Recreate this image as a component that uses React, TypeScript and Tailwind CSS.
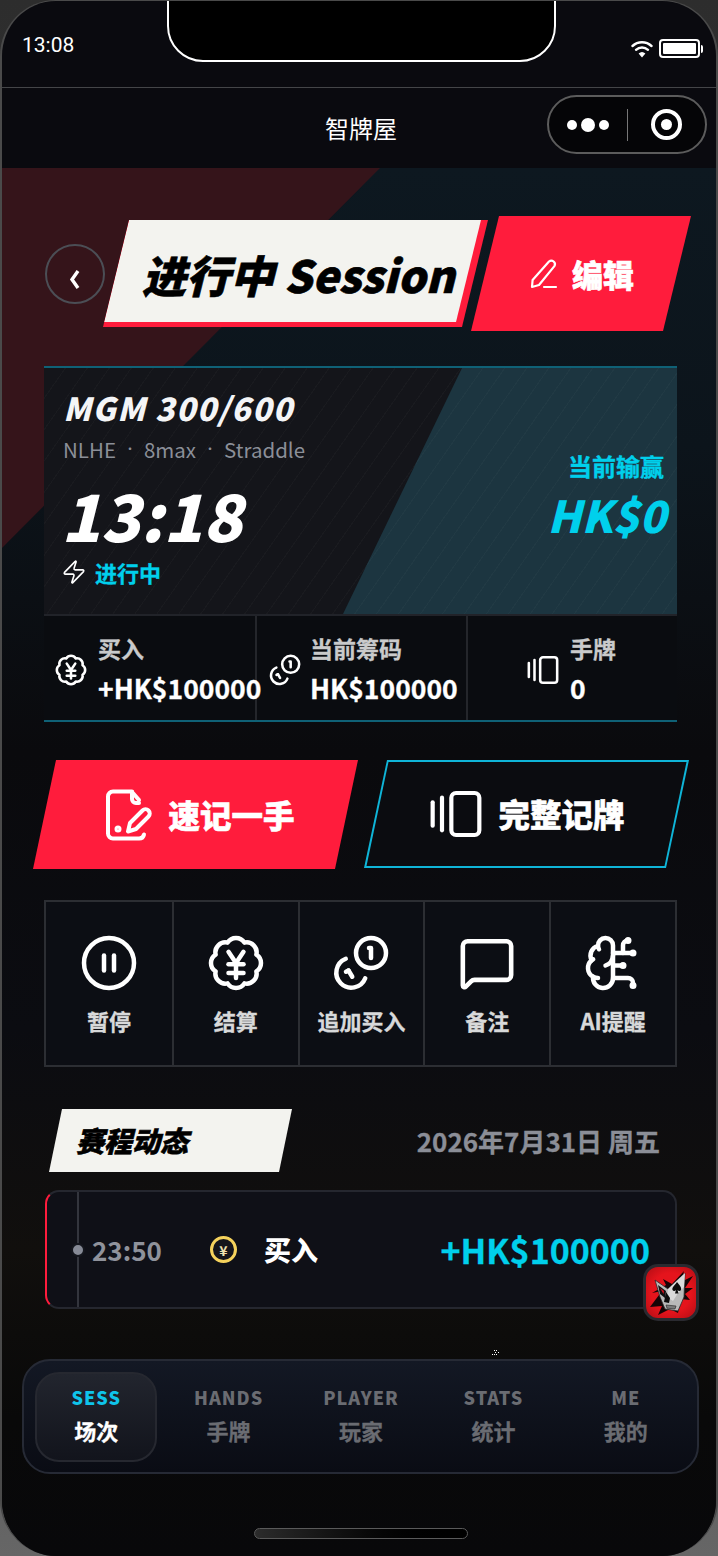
import {
  BrainCircuit,
  CirclePause,
  GalleryHorizontalEnd,
  MessageSquare,
  Zap,
} from "lucide-react";

const cjk = "font-['Noto_Sans_CJK_SC',sans-serif]";
const heavy = "font-black [-webkit-text-stroke:0.6px_currentColor]";
const thick = "font-bold [-webkit-text-stroke:0.3px_currentColor]";

function YenBadge({ size, strokeWidth = 2 }: { size: number; strokeWidth?: number }) {
  return (
    <svg width={size} height={size} viewBox="0 0 24 24" fill="none" stroke="currentColor" strokeWidth={strokeWidth} strokeLinecap="round" strokeLinejoin="round">
      <path d="M3.85 8.62a4 4 0 0 1 4.78-4.77 4 4 0 0 1 6.74 0 4 4 0 0 1 4.78 4.78 4 4 0 0 1 0 6.74 4 4 0 0 1-4.77 4.78 4 4 0 0 1-6.75 0 4 4 0 0 1-4.78-4.77 4 4 0 0 1 0-6.76Z" />
      <path d="m9 7.5 3 4.5 3-4.5" />
      <path d="M9 12.5h6" />
      <path d="M9 16h6" />
      <path d="M12 12v6" />
    </svg>
  );
}

function CoinsIcon({ size, strokeWidth = 2 }: { size: number; strokeWidth?: number }) {
  return (
    <svg width={size} height={size} viewBox="0 0 24 24" fill="none" stroke="currentColor" strokeWidth={strokeWidth} strokeLinecap="round" strokeLinejoin="round">
      <circle cx="16" cy="8" r="6" />
      <path d="M15.2 6H16v4" />
      <path d="M13.7 18.1A6 6 0 1 1 5.9 10.3" />
      <path d="m7 15 1.5 2.5" />
      <path d="m6 15.5 1-.5" />
    </svg>
  );
}

function QuickNoteIcon() {
  return (
    <svg width="48" height="52" viewBox="0 0 48 52" fill="none" stroke="currentColor" strokeWidth="4" strokeLinecap="round" strokeLinejoin="round">
      <path d="M27 2.5H8a5 5 0 0 0-5 5v37a5 5 0 0 0 5 5h26a5 5 0 0 0 5-4" />
      <path d="M27 3v7a4 4 0 0 0 4 4h3" />
      <path d="M27 3l7 8" />
      <circle cx="13" cy="40" r="1.5" />
      <path d="M37.5 21.5a4.2 4.2 0 0 1 6 6L31 40l-8 2.5 2-8.5z" />
    </svg>
  );
}

function PenIcon() {
  return (
    <svg width="30" height="32" viewBox="0 0 30 32" fill="none" stroke="currentColor" strokeWidth="2.2" strokeLinecap="round" strokeLinejoin="round">
      <path d="M20 3.5a3.6 3.6 0 0 1 5.4 4.6L10 27l-7 2 .6-7z" />
      <path d="M15 29h12" />
    </svg>
  );
}

function JokerIcon() {
  return (
    <svg width="50" height="51" viewBox="0 0 50 51">
      <path d="M4 40 16 24 6 26l14-8-3-6 9 5 12-13-3 11 12-6-8 12 8 0-8 6 5 6-9-1-3 14-8-4-12 6 4-9z" fill="#160406" />
      <path d="M9 13l13 9L39 6l-1 24-6 14-13-2-5-12z" fill="#b9b9b9" stroke="#2b2b2b" strokeWidth="0.8" />
      <path d="M22 22 39 6l-1 14-6 6-5 8-6-4z" fill="#dadada" />
      <path d="M31 15c2 3 5 5 4 8-1 1.600-2.500 1-3.500 0l1 3.500h-3.500l1-3.500c-1 1-2.500 1.500-3.500 0-1-3 3-5 4.500-8z" fill="#0c0c0c" />
      <path d="M12 18l8 6-1 7-5-4z" fill="#101010" />
      <path d="M14 21l4 3-.5 3z" fill="#d3121f" />
      <path d="M20 25l4 6-1 5-5-1z" fill="#0c0c0c" />
      <path d="M20 38l10 1-1 3-8-.8z" fill="#7a7a7a" stroke="#222" strokeWidth="0.6" />
    </svg>
  );
}

const stats = [
  { label: "买入", value: "+HK$100000", wrap: "pl-[10px] gap-[10px]", icon: <YenBadge size={34} strokeWidth={1.8} /> },
  { label: "当前筹码", value: "HK$100000", wrap: "pl-[11px] gap-[8px]", icon: <CoinsIcon size={34} strokeWidth={1.8} /> },
  { label: "手牌", value: "0", wrap: "pl-[58px] gap-[10px]", icon: <GalleryHorizontalEnd size={34} strokeWidth={1.8} /> },
];

const actions = [
  { label: "暂停", icon: <CirclePause size={60} strokeWidth={1.8} /> },
  { label: "结算", icon: <YenBadge size={60} strokeWidth={1.8} /> },
  { label: "追加买入", icon: <CoinsIcon size={60} strokeWidth={1.8} /> },
  { label: "备注", icon: <MessageSquare size={58} strokeWidth={1.9} /> },
  { label: "AI提醒", icon: <BrainCircuit size={60} strokeWidth={1.8} /> },
];

const tabs = [
  { en: "SESS", zh: "场次", active: true },
  { en: "HANDS", zh: "手牌" },
  { en: "PLAYER", zh: "玩家" },
  { en: "STATS", zh: "统计" },
  { en: "ME", zh: "我的" },
];

export default function App() {
  return (
    <div className={`relative h-[1556px] w-[718px] overflow-hidden bg-gradient-to-b from-[#2d2d2d] via-[#3a3a3a] to-[#666666] ${cjk}`}>
      <div className="relative flex h-full flex-col overflow-hidden rounded-[56px] border-l-2 border-r-2 border-t border-[#4a4a4a] bg-[#0a0a0f] text-white">
        {/* notch */}
        <div className="absolute left-[165px] top-[-2px] z-20 h-[63px] w-[389px] rounded-b-[36px] border-2 border-white bg-black" />

        <div className="flex h-[87px] shrink-0 items-start justify-between border-b border-[#444548] pl-[20px] pr-[13px] pt-[30px]">
          <span className="font-['Roboto',sans-serif] text-[21px] leading-[28px]">13:08</span>
          <div className="flex items-center gap-[6px] pt-[8px]">
            <svg width="22" height="18" viewBox="0 0 22 18" fill="none" stroke="white" strokeWidth="2.4" strokeLinecap="round">
              <path d="M1.500 6a14 14 0 0 1 19 0" />
              <path d="M5 9.800a9 9 0 0 1 12 0" />
              <path d="M11 17.500l-3.400-4a5 5 0 0 1 6.800 0z" fill="white" stroke="none" />
            </svg>
            <div className="flex items-center gap-[1px]">
              <div className="h-[19px] w-[41px] rounded-[4px] border-2 border-white p-[2px]">
                <div className="h-full w-full rounded-[1px] bg-white" />
              </div>
              <div className="h-[8px] w-[2px] rounded-r bg-white" />
            </div>
          </div>
        </div>

        <div className="relative flex h-[80px] shrink-0 items-center justify-center pl-[4px]">
          <span className="text-[24px] leading-none">智牌屋</span>
          <div className="absolute right-[9px] top-[7px] flex h-[59px] w-[160px] items-center rounded-full border-2 border-[#5c5c5c] bg-[#050507]">
            <div className="flex w-[60px] items-center justify-end gap-[4px]">
              <span className="h-[10px] w-[10px] rounded-full bg-white" />
              <span className="h-[14px] w-[14px] rounded-full bg-white" />
              <span className="h-[10px] w-[10px] rounded-full bg-white" />
            </div>
            <div className="ml-[18px] h-[32px] w-[1px] bg-[#777777]" />
            <div className="ml-[23px] flex h-[31px] w-[31px] items-center justify-center rounded-full border-[4px] border-white">
              <span className="h-[11px] w-[11px] rounded-full bg-white" />
            </div>
          </div>
        </div>

        <div className="relative flex-1 bg-[linear-gradient(180deg,#0d1820_0%,#0c141b_20%,#0a0a0d_42%,#0b0c11_62%,#110f0d_78%,#090909_90%,#08080a_100%)]">
          {/* diagonal red wedge behind header */}
          <div className="absolute left-0 top-0 h-[380px] w-[378px] bg-[#35141a] [clip-path:polygon(0_0,100%_0,0_100%)]" />

          <div className="relative flex flex-col">
            <div className="flex items-center pl-[43px] pt-[48px]">
              <div className="flex h-[60px] w-[60px] shrink-0 items-center justify-center rounded-full border-2 border-[#4b4e55]">
                <svg width="14" height="22" viewBox="0 0 14 22" fill="none" stroke="white" strokeWidth="3.4" className="mt-[12px]">
                  <path d="M10 2 4 10.500l6 8.500" />
                </svg>
              </div>
              <div className="relative -ml-[2px] h-[107px] w-[385px] shrink-0 bg-[#ff1c3c] [clip-path:polygon(26px_0,100%_0,359px_100%,0_100%)]">
                <div className="flex h-[102px] w-[378px] items-center bg-[#f3f3ef] pl-[39px] pt-[5px] text-black [clip-path:polygon(26px_0,100%_0,353px_100%,1px_100%)]">
                  <span className={`whitespace-nowrap text-[44px] italic leading-none ${heavy}`}>进行中 Session</span>
                </div>
              </div>
              <div className="-ml-[17px] flex h-[115px] w-[220px] shrink-0 items-center justify-center gap-[13px] bg-[#ff1c3c] pl-[1px] [clip-path:polygon(28px_0,100%_0,192px_100%,0_100%)]">
                <PenIcon />
                <span className={`text-[31px] leading-none ${heavy}`}>编辑</span>
              </div>
            </div>

            <div className="ml-[42px] mt-[35px] w-[633px] border-y-2 border-[#0f6176]">
              <div className="relative h-[246px] bg-[#14151a]">
                <div className="absolute inset-0 bg-[#1c3540] [clip-path:polygon(418px_0,100%_0,100%_100%,299px_100%)]" />
                <div className="absolute inset-0 bg-[repeating-linear-gradient(125deg,transparent_0,transparent_17px,rgba(255,255,255,0.025)_17px,rgba(255,255,255,0.025)_18px)]" />
                <div className="relative flex h-full justify-between pl-[19px] pr-[11px]">
                  <div className="flex flex-col">
                    <span className="mt-[19px] whitespace-nowrap text-[32px] font-black italic leading-[40px] tracking-[1.300px] text-[#f4f5f7]">MGM 300/600</span>
                    <div className="mt-[8px] flex items-center gap-[8px] text-[20.500px] leading-[28px] text-[#8b8f98]">
                      <span>NLHE</span>
                      <span className="text-[12px]">•</span>
                      <span>8max</span>
                      <span className="text-[12px]">•</span>
                      <span>Straddle</span>
                    </div>
                    <span className="ml-[-2px] mt-[15px] text-[65px] font-black italic leading-[72px]">13:18</span>
                    <div className="ml-[-2px] mt-[8px] flex items-center gap-[8px]">
                      <Zap size={26} strokeWidth={1.500} />
                      <span className={`text-[22px] leading-[28px] text-[#00d0ec] ${thick}`}>进行中</span>
                    </div>
                  </div>
                  <div className="flex flex-col items-end pt-[82px]">
                    <span className={`mr-[2px] text-[24px] leading-[32px] text-[#00d0ec] ${thick}`}>当前输赢</span>
                    <span className="mt-[2px] text-[44px] font-black italic leading-[60px] text-[#00d0ec]">HK$0</span>
                  </div>
                </div>
              </div>
              <div className="grid h-[106px] grid-cols-3 border-t-2 border-[#212329] bg-[#0a0c10]">
                {stats.map((stat, i) => (
                  <div key={stat.label} className={`flex items-center ${stat.wrap} ${i > 0 ? "border-l-2 border-[#24262b]" : ""}`}>
                    <div className="shrink-0 pt-[3px]">{stat.icon}</div>
                    <div className={`relative z-10 flex flex-col whitespace-nowrap ${thick}`}>
                      <span className="text-[23px] leading-[36px] text-[#c9cacb]">{stat.label}</span>
                      <span className="mt-[3px] text-[26.500px] leading-[38px]">{stat.value}</span>
                    </div>
                  </div>
                ))}
              </div>
            </div>

            <div className="mt-[38px] flex gap-[6px] pl-[31px]">
              <div className="flex h-[109px] w-[325px] items-center justify-center gap-[15px] bg-[#ff1c3c] pl-[9px] [clip-path:polygon(23px_0,100%_0,302px_100%,0_100%)]">
                <QuickNoteIcon />
                <span className={`text-[31.500px] leading-none ${heavy}`}>速记一手</span>
              </div>
              <div className="h-[108px] w-[325px] bg-[#0fb5d8] [clip-path:polygon(23px_0,100%_0,302px_100%,0_100%)]">
                <div className="flex h-full w-full items-center justify-center gap-[14px] bg-[#0b0c10] [clip-path:polygon(24.500px_2px,calc(100%_-_2.500px)_2px,300.500px_calc(100%_-_2px),2.500px_calc(100%_-_2px))]">
                  <GalleryHorizontalEnd size={56} strokeWidth={1.800} />
                  <span className={`text-[31.500px] leading-none ${heavy}`}>完整记牌</span>
                </div>
              </div>
            </div>

            <div className="ml-[42px] mt-[31px] grid h-[167px] w-[633px] grid-cols-5 border-2 border-[#2c2e33] bg-[#0c0e14]">
              {actions.map((action, i) => (
                <div key={action.label} className={`flex flex-col items-center pt-[30px] ${i > 0 ? "border-l-2 border-[#2c2e33]" : ""}`}>
                  <div className="flex h-[62px] items-center justify-center">{action.icon}</div>
                  <span className={`mt-[10px] whitespace-nowrap text-[22px] leading-[32px] text-[#d8d9da] ${thick}`}>{action.label}</span>
                </div>
              ))}
            </div>

            <div className="mt-[42px] flex items-center justify-between pl-[47px] pr-[56px]">
              <div className="flex h-[63px] w-[243px] items-center bg-[#f3f3ef] pb-[1px] pl-[27px] [clip-path:polygon(13px_0,100%_0,230px_100%,0_100%)]">
                <span className={`text-[28px] italic leading-none text-black ${heavy}`}>赛程动态</span>
              </div>
              <span className={`text-[26px] leading-none text-[#8b8e97] ${thick}`}>2026年7月31日 周五</span>
            </div>

            <div className="relative ml-[43px] mt-[18px] flex h-[119px] w-[632px] items-center overflow-hidden rounded-[14px] border-2 border-[#25272f] border-l-[#ff1c3c] bg-[#0f1017] pr-[25px]">
              <div className="absolute bottom-0 left-[30px] top-0 w-[2px] bg-[#33353d]" />
              <span className="absolute left-[24px] top-[51px] h-[14px] w-[14px] rounded-full border-2 border-[#14161d] bg-[#868a96]" />
              <span className="ml-[45px] w-[118px] shrink-0 text-[26px] font-bold leading-none text-[#8f929b]">23:50</span>
              <div className="flex h-[27px] w-[27px] shrink-0 items-center justify-center rounded-full border-[3px] border-[#f5d25c] bg-[#15151b] text-[14px] font-bold leading-none text-[#f0e3b0]">¥</div>
              <span className="ml-[27px] text-[27px] font-black leading-none">买入</span>
              <span className={`ml-auto text-[34px] leading-none text-[#00d0ec] ${thick}`}>+HK$100000</span>
            </div>
          </div>

          {/* floating app badge */}
          <div className="absolute left-[641px] top-[1096px] z-10 flex h-[57px] w-[56px] items-center justify-center overflow-hidden rounded-[15px] border-[3px] border-[#2a2a30] bg-[radial-gradient(circle,#e5141c_55%,#b00d14_100%)]">
            <JokerIcon />
          </div>

          <svg className="absolute left-[489px] top-[1181px]" width="9" height="7" viewBox="0 0 9 7" fill="white">
            <rect x="3" y="1" width="1" height="1" />
            <rect x="5" y="1" width="1" height="1" />
            <rect x="4" y="3" width="1" height="1" />
            <rect x="7" y="3" width="1" height="1" />
            <rect x="1" y="5" width="1" height="1" />
            <rect x="3" y="5" width="1" height="1" />
            <rect x="5" y="5" width="1" height="1" />
          </svg>

          {/* bottom tab bar */}
          <div className="absolute left-[20px] top-[1191px] grid h-[115px] w-[677px] grid-cols-5 items-center rounded-[28px] border-2 border-[#262a35] bg-gradient-to-b from-[#131824] to-[#0a0c14] pl-[6px] pr-[5px]">
            {tabs.map((tab) => (
              <div key={tab.en} className={`mx-auto flex h-[90px] w-[122px] flex-col items-center justify-center rounded-[24px] border-2 pb-[5px] ${tab.active ? "border-[#262830] bg-gradient-to-b from-[#22252e] to-[#12141c]" : "border-transparent"}`}>
                <span className={`text-[18px] font-black leading-[26px] tracking-[1px] ${tab.active ? "text-[#0fc4ea]" : "text-[#6a6c72]"}`}>{tab.en}</span>
                <span className={`mt-[5px] text-[22px] leading-[30px] ${thick} ${tab.active ? "text-white" : "text-[#6a6c72]"}`}>{tab.zh}</span>
              </div>
            ))}
          </div>

          <div className="absolute left-[252px] top-[1360px] h-[11px] w-[214px] rounded-full border-[1.5px] border-[#5a5a5a] bg-gradient-to-r from-[#2c2c2c] to-black" />
        </div>
      </div>
    </div>
  );
}
